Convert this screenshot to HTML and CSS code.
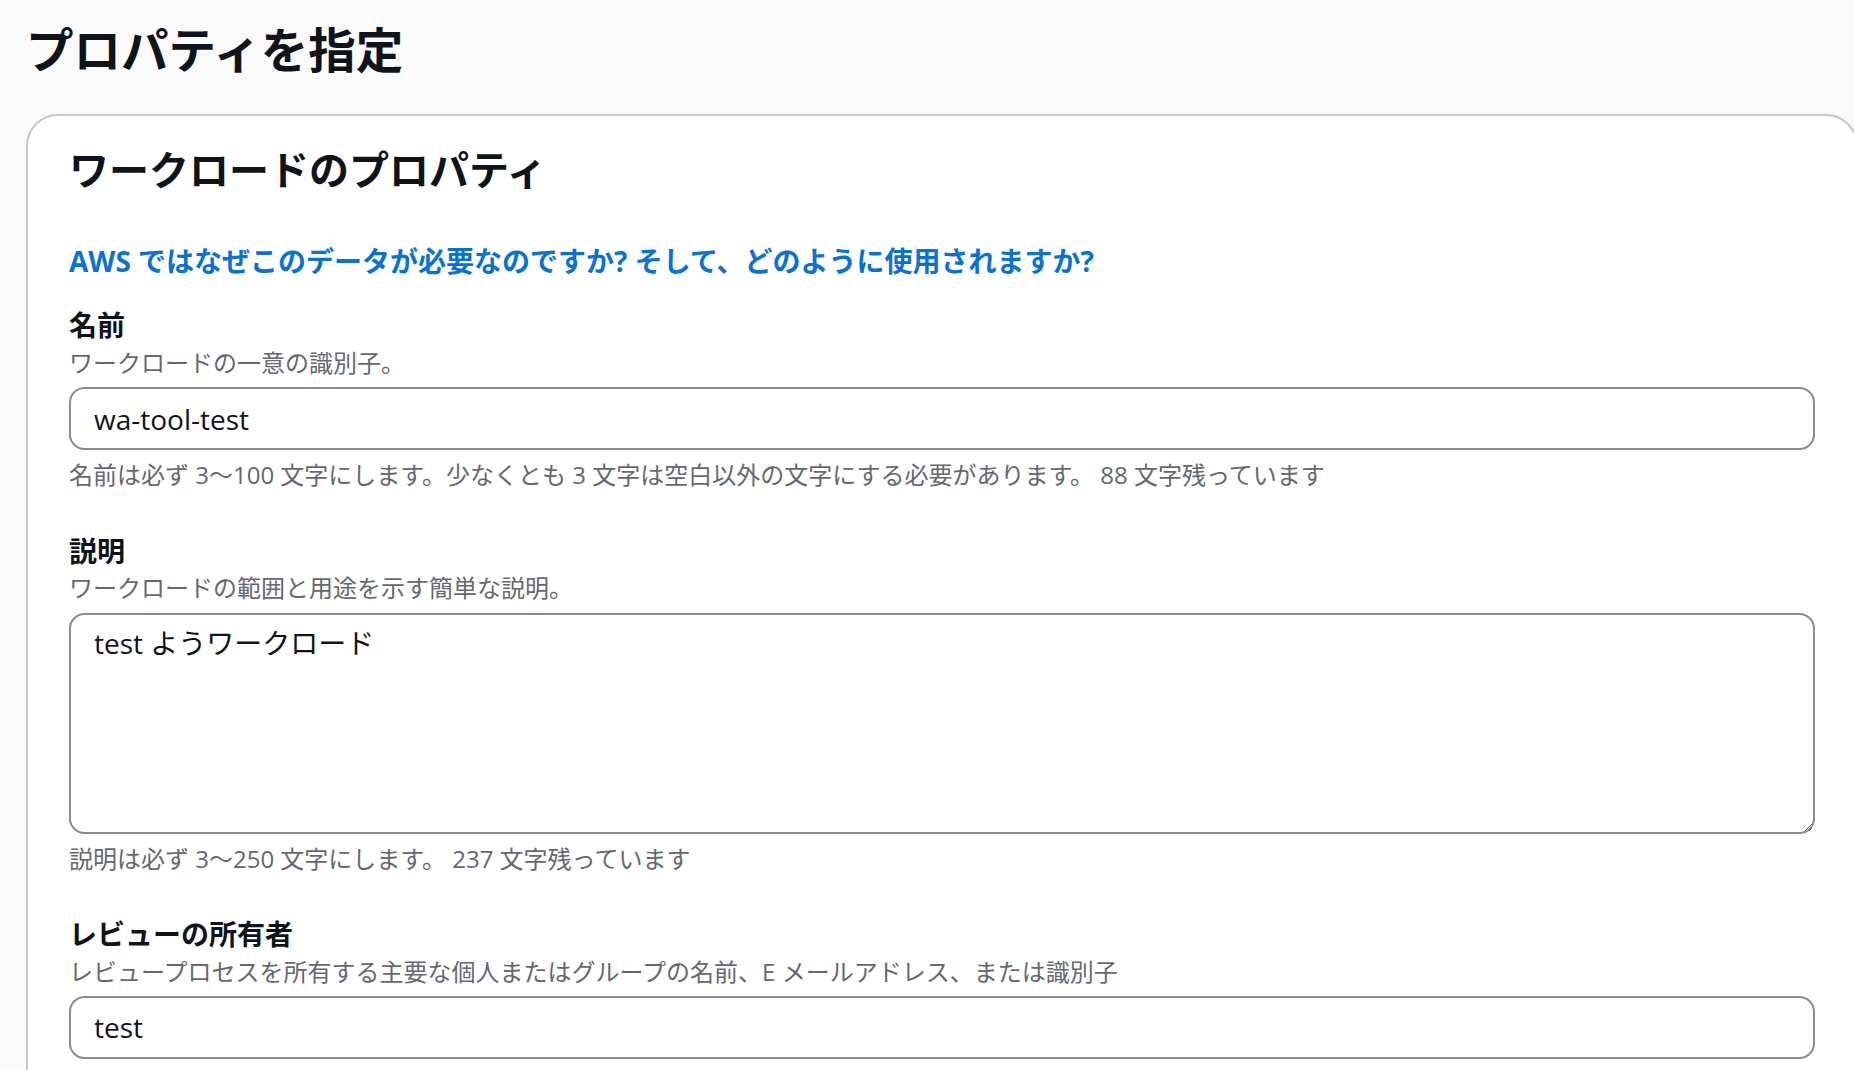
FILE: index.html
```html
<!DOCTYPE html>
<html lang="ja">
<head>
    <meta charset="UTF-8">
    <meta name="viewport" content="width=device-width, initial-scale=1.0">
    <title>プロパティを指定</title>
    <link rel="stylesheet" href="styles.css">
</head>
<body>
    <div class="page">
        <h1 class="page-title">プロパティを指定</h1>

        <div class="container">
            <h2 class="container-title">ワークロードのプロパティ</h2>

            <a class="info-link" href="#">AWS ではなぜこのデータが必要なのですか? そして、どのように使用されますか?</a>

            <div class="fields">
                <div class="field">
                    <label class="field-label" for="wl-name">名前</label>
                    <div class="field-desc">ワークロードの一意の識別子。</div>
                    <input class="field-input" id="wl-name" type="text" value="wa-tool-test">
                    <div class="field-hint">名前は必ず 3～100 文字にします。少なくとも 3 文字は空白以外の文字にする必要があります。 88 文字残っています</div>
                </div>

                <div class="field">
                    <label class="field-label" for="wl-desc">説明</label>
                    <div class="field-desc">ワークロードの範囲と用途を示す簡単な説明。</div>
                    <textarea class="field-input field-textarea" id="wl-desc">test ようワークロード</textarea>
                    <div class="field-hint">説明は必ず 3～250 文字にします。 237 文字残っています</div>
                </div>

                <div class="field">
                    <label class="field-label" for="wl-owner">レビューの所有者</label>
                    <div class="field-desc">レビュープロセスを所有する主要な個人またはグループの名前、E メールアドレス、または識別子</div>
                    <input class="field-input" id="wl-owner" type="text" value="test">
                    <div class="field-hint">所有者は必ず 3～255 文字にします。 251 文字残っています</div>
                </div>
            </div>
        </div>
    </div>
</body>
</html>
```

FILE: styles.css
```css
body {
    margin: 0;
    background: #fafafa;
    color: #0f141a;
    font-family: "Open Sans", "Noto Sans CJK JP", sans-serif;
    overflow: hidden;
}

.page {
    width: 1832px;
    padding: 21px 0 0 26px;
}

.page-title {
    margin: 0 0 34px;
    font-size: 47.5px;
    line-height: 58.5px;
    font-weight: 700;
}

.container {
    background: #fff;
    border: 2px solid #c6c6cd;
    border-radius: 32px;
    padding: 31px 41px 40px;
}

.container-title {
    margin: 0 0 47px;
    font-size: 40px;
    line-height: 46.8px;
    font-weight: 700;
}

.info-link {
    display: block;
    color: #0972d3;
    font-size: 28px;
    line-height: 42.9px;
    font-weight: 700;
    text-decoration: none;
}

.fields {
    display: flex;
    flex-direction: column;
    gap: 39px;
    margin-top: 21px;
}

.field {
    display: flex;
    flex-direction: column;
}

.field-label {
    font-size: 28px;
    line-height: 42.9px;
    font-weight: 700;
}

.field-desc,
.field-hint {
    color: #656871;
    font-size: 24px;
    line-height: 31.2px;
}

.field-input {
    box-sizing: border-box;
    height: 63px;
    margin: 9px 0;
    padding: 0 23px;
    border: 2px solid #8c8c94;
    border-radius: 15.6px;
    background: #fff;
    color: #0f141a;
    font-family: inherit;
    font-size: 28px;
    outline: none;
}

.field-textarea {
    height: 221px;
    padding: 7px 23px;
    line-height: 42.9px;
    resize: vertical;
}
```
